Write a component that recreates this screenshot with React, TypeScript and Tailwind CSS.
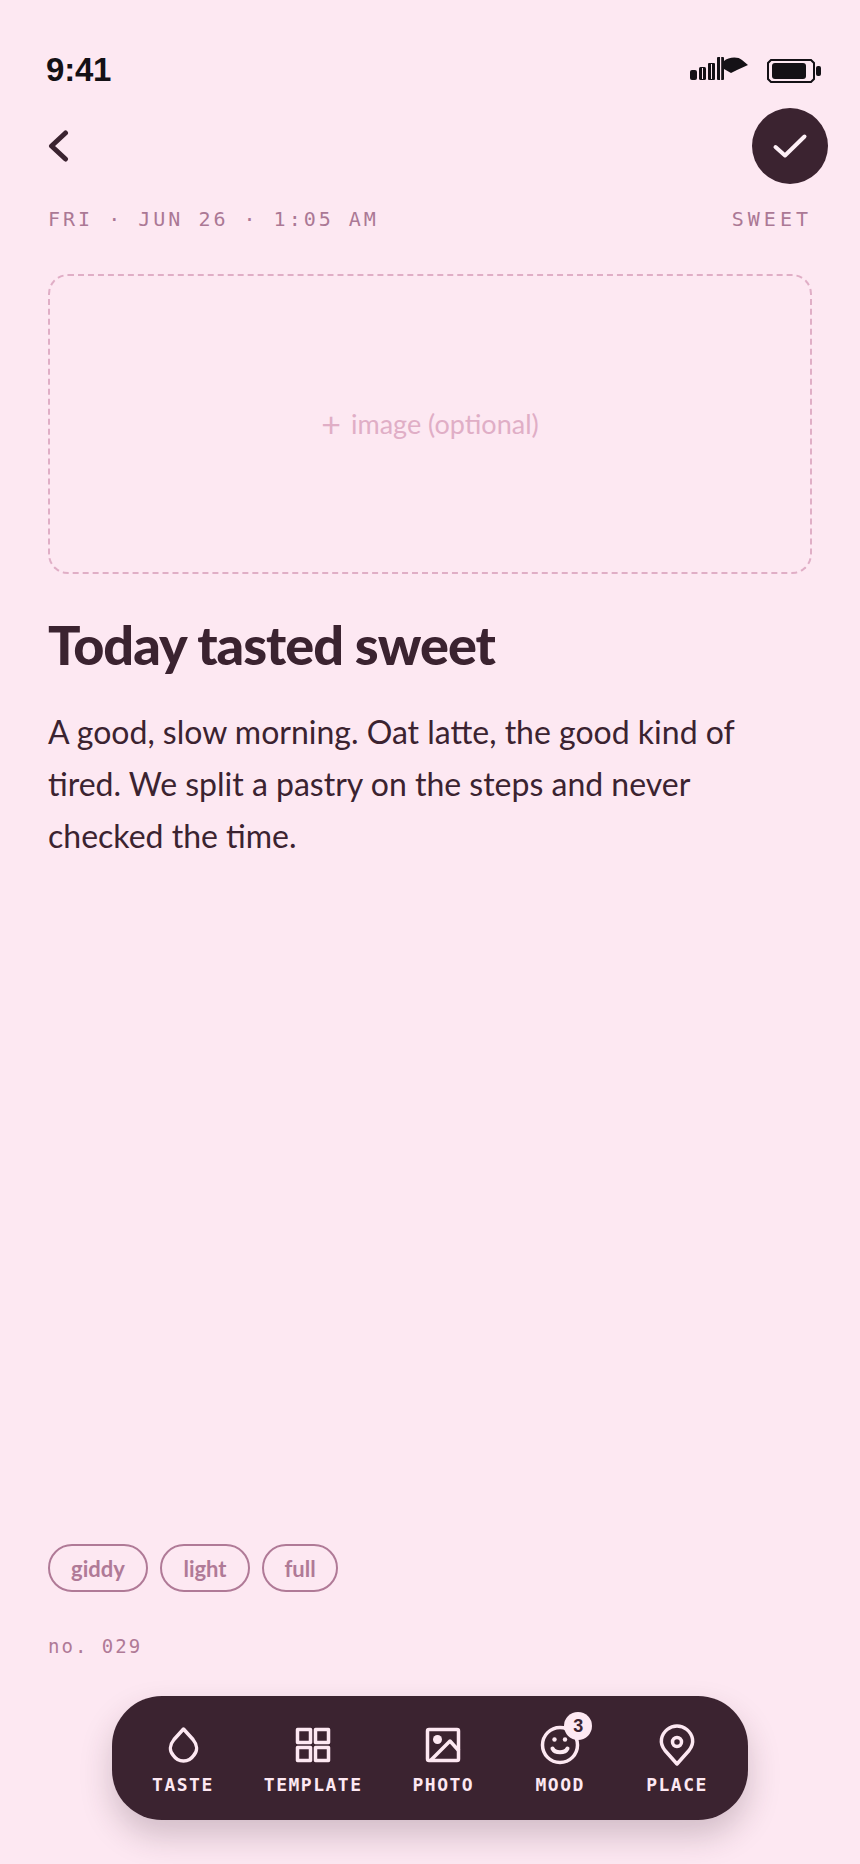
import type { ReactNode } from "react";

const DropIcon = () => (
  <svg width="44" height="44" viewBox="0 0 44 44" fill="none" stroke="currentColor" strokeWidth="3.5" strokeLinejoin="round">
    <path d="M22.5 6 L32 16.5 C36.5 22 36.5 28 33 32 C30 36.5 26 38 22.5 38 C19 38 15 36.5 12 32 C8.500 28 8.500 22 13 16.5 Z" />
  </svg>
);

const GridIcon = () => (
  <svg width="44" height="44" viewBox="0 0 44 44" fill="none" stroke="currentColor" strokeWidth="3.5" strokeLinejoin="round">
    <rect x="6.5" y="6.5" width="13" height="13" />
    <rect x="24.5" y="6.5" width="13" height="13" />
    <rect x="6.5" y="24.5" width="13" height="13" />
    <rect x="24.5" y="24.5" width="13" height="13" />
  </svg>
);

const PhotoIcon = () => (
  <svg width="44" height="44" viewBox="0 0 44 44" fill="none" stroke="currentColor" strokeWidth="3.5" strokeLinejoin="round">
    <rect x="6.5" y="6.5" width="31" height="31" rx="1.5" />
    <circle cx="16.5" cy="16.5" r="4.5" fill="currentColor" stroke="none" />
    <path d="M10 37 L29 18 L38 28" />
  </svg>
);

const SmileIcon = () => (
  <svg width="44" height="44" viewBox="0 0 44 44" fill="none" stroke="currentColor" strokeWidth="3.5" strokeLinecap="round">
    <circle cx="22" cy="22" r="17.5" />
    <circle cx="16.5" cy="16.5" r="2.2" fill="currentColor" stroke="none" />
    <circle cx="27" cy="16.5" r="2.2" fill="currentColor" stroke="none" />
    <path d="M14.5 25.5 C17 30.5 27 30.5 29.5 25.5" strokeWidth="4" />
  </svg>
);

const PinIcon = () => (
  <svg width="44" height="44" viewBox="0 0 44 44" fill="none" stroke="currentColor" strokeWidth="3.5" strokeLinejoin="round">
    <path d="M22 41 L10 27.5 C6.5 23 6 19 6.5 16 C8 8 15 3 22 3 C29 3 36 8 37.5 16 C38 19 37.5 23 34 27.5 Z" />
    <circle cx="22" cy="19" r="4.5" />
  </svg>
);

const StatusIcons = () => (
  <svg width="132" height="27" viewBox="0 0 132 27" className="text-[#141116]" fill="currentColor">
    <rect x="1" y="14" width="7" height="10" rx="2" />
    <rect x="10" y="11" width="7" height="13" rx="1.5" />
    <rect x="19" y="7" width="7" height="17" rx="1" />
    <rect x="28" y="1" width="7" height="23" rx="1" />
    <path d="M31 0h1.2v24H31z" fill="#fde7f1" />
    <path d="M22 8h1v15h-1z" fill="#fde7f1" />
    <path d="M13 12h1v11h-1z" fill="#fde7f1" />
    <path d="M35 5 C39 1 49 0 53 4 L59 9 L48 14 L42 17 L35 13 Z" />
    <path d="M82 4 h40 l3 3 v16 l-3 3 h-40 l-3 -3 v-16 z" fill="none" stroke="currentColor" strokeWidth="2" />
    <rect x="83" y="7" width="34" height="16" rx="3" />
    <rect x="127" y="10" width="5" height="10" rx="2" />
  </svg>
);

const NavItem = ({ label, children, className = "" }: { label: string; children: ReactNode; className?: string }) => (
  <div className={`relative flex flex-col items-center ${className}`}>
    <div className="h-11">{children}</div>
    <span className="mt-[6px] font-['DejaVu_Sans_Mono',monospace] text-[18px] leading-[24px] font-bold tracking-[1.5px] whitespace-nowrap">
      {label}
    </span>
  </div>
);

export default function App() {
  return (
    <div className="flex h-[1864px] w-[860px] flex-col overflow-hidden bg-[#fde8f2] px-12 font-['Lato',sans-serif] text-[#3b2330]">
      {/* status bar */}
      <div className="flex h-[108px] shrink-0 items-start justify-between">
        <span className="mt-[48px] -ml-[2px] font-['Liberation_Sans',sans-serif] text-[33px] leading-[44px] font-bold tracking-[-0.2px] text-[#141116]">
          9:41
        </span>
        <div className="mt-[56px] -mr-[9px] w-[132px]">
          <StatusIcons />
        </div>
      </div>

      {/* header */}
      <div className="flex h-[76px] shrink-0 items-center justify-between">
        <svg width="24" height="36" viewBox="0 0 24 36" fill="none" stroke="currentColor" strokeWidth="5" strokeLinecap="round" strokeLinejoin="round">
          <path d="M17.5 5 L3.5 18 L17.5 31" />
        </svg>
        <button className="-mr-4 flex h-[76px] w-[76px] items-center justify-center rounded-full bg-[#3b2330] text-[#fdf0f6]">
          <svg width="36" height="30" viewBox="0 0 36 30" fill="none" stroke="currentColor" strokeWidth="4" strokeLinecap="round" strokeLinejoin="round">
            <path d="M3.5 16 L13 24.5 L32.5 5.5" />
          </svg>
        </button>
      </div>

      <div className="mt-[22px] flex shrink-0 items-center justify-between font-['DejaVu_Sans_Mono',monospace] text-[20px] leading-[26px] text-[#ab7895]">
        <span className="tracking-[3px] whitespace-pre">FRI · JUN 26 · 1:05 AM</span>
        <span className="tracking-[4px]">SWEET</span>
      </div>

      <div className="mt-[42px] flex h-[300px] shrink-0 items-center justify-center gap-[10px] rounded-[20px] border-2 border-dashed border-[#e0aec6] text-[27px] text-[#e0aec6]">
        <span className="text-[34px] leading-none">+</span>
        <span>image (optional)</span>
      </div>

      <h1 className="mt-[39px] text-[54px] leading-[64px] font-black tracking-[-1px]">Today tasted sweet</h1>

      <p className="mt-[29px] pr-[30px] text-[32px] leading-[52px]">
        A good, slow morning. Oat latte, the good kind of tired. We split a pastry on the steps and never checked the time.
      </p>

      <div className="flex-1" />

      <div className="flex gap-3 text-[22px] font-bold text-[#b07a97]">
        <span className="flex h-12 w-[100px] items-center justify-center rounded-full border-2 border-[#b07a97]">giddy</span>
        <span className="flex h-12 w-[90px] items-center justify-center rounded-full border-2 border-[#b07a97]">light</span>
        <span className="flex h-12 w-[76px] items-center justify-center rounded-full border-2 border-[#b07a97]">full</span>
      </div>

      <div className="mt-[41px] font-['DejaVu_Sans_Mono',monospace] text-[19px] leading-[26px] tracking-[2px] text-[#b07a97]">
        no. 029
      </div>

      {/* bottom toolbar */}
      <div className="mx-auto mt-[37px] mb-[44px] flex h-[124px] w-[636px] shrink-0 items-start justify-center gap-[50px] rounded-[50px] bg-[#3b2330] pt-[27px] text-[#fde8f2] shadow-[0_16px_32px_rgba(59,35,48,0.22)]">
        <NavItem label="TASTE"><DropIcon /></NavItem>
        <NavItem label="TEMPLATE"><GridIcon /></NavItem>
        <NavItem label="PHOTO"><PhotoIcon /></NavItem>
        <NavItem label="MOOD" className="w-[72px]">
          <SmileIcon />
          <span className="absolute -top-[11px] right-[4px] flex h-7 w-7 items-center justify-center rounded-full bg-[#fde8f2] font-['Liberation_Sans',sans-serif] text-[18px] font-bold text-[#3b2330]">
            3
          </span>
        </NavItem>
        <NavItem label="PLACE"><PinIcon /></NavItem>
      </div>
    </div>
  );
}
